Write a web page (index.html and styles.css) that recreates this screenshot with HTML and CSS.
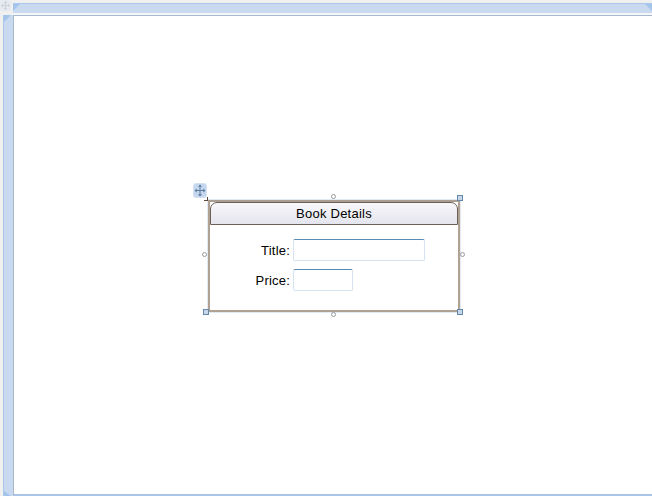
FILE: index.html
```html
<!DOCTYPE html>
<html lang="en">
<head>
<meta charset="utf-8">
<title>Book Details designer</title>
<link rel="stylesheet" href="styles.css">
</head>
<body>
<div class="designer">
  <div class="top-row">
    <svg class="corner-icon" width="13" height="13" viewBox="0 0 13 13">
      <rect x="0" y="0" width="11" height="11" rx="2" fill="#e6e9ee"/>
      <path d="M5.5 1.5v8M1.5 5.5h8M4 3l1.5-1.5L7 3M4 8l1.5 1.5L7 8M3 4L1.5 5.5 3 7M8 4l1.5 1.5L8 7" fill="none" stroke="#cdd3db" stroke-width="1"/>
    </svg>
    <div class="ruler ruler-top">
      <span class="tick tick-left"></span>
      <span class="tick tick-right"></span>
    </div>
  </div>
  <div class="main-row">
    <div class="ruler ruler-left">
      <span class="tick tick-start"></span>
      <span class="tick tick-end"></span>
    </div>
    <div class="canvas">
      <div class="selection">
        <svg class="move-handle" width="14" height="15" viewBox="0 0 14 15">
          <rect x="0.5" y="0.5" width="13" height="14" rx="2.5" fill="#c5d7ee" stroke="#d6e2f2"/>
          <path d="M7 2.5v10M2.5 7.5h9" stroke="#5f7c9e" stroke-width="1" fill="none"/>
          <path d="M7 1.5l2 2.2H5zM7 13.5l2-2.2H5zM1.5 7.5l2.2-2v4zM12.5 7.5l-2.2-2v4z" fill="#5f7c9e"/>
        </svg>
        <span class="corner-mark"></span>
        <span class="handle round top-mid"></span>
        <span class="handle round left-mid"></span>
        <span class="handle round right-mid"></span>
        <span class="handle round bottom-mid"></span>
        <span class="handle square top-right"></span>
        <span class="handle square bottom-left"></span>
        <span class="handle square bottom-right"></span>
        <div class="card">
          <div class="card-header">Book Details</div>
          <div class="card-body">
            <div class="field">
              <label class="field-label">Title:</label>
              <input class="text-input wide" type="text">
            </div>
            <div class="field">
              <label class="field-label">Price:</label>
              <input class="text-input narrow" type="text">
            </div>
          </div>
        </div>
      </div>
    </div>
  </div>
</div>
</body>
</html>
```

FILE: styles.css
```css
* { box-sizing: border-box; }
html, body { margin: 0; padding: 0; height: 100%; overflow: hidden; }
body { background: #f0f0f0; font-family: "Liberation Sans", Arial, sans-serif; }

.designer { width: 652px; height: 496px; display: flex; flex-direction: column; padding-top: 3px; }

.top-row { height: 12px; display: flex; flex: none; padding-left: 13px; position: relative; }
.corner-icon { position: absolute; left: 0; top: -3px; }

.ruler { background: #c9daf0; position: relative; }
.ruler-top { flex: 1; border-top: 1px solid #a9c8ec; border-bottom: 2px solid #f4f6f9; }
.ruler-left { width: 10px; flex: none; margin-left: 3px; border-left: 1px solid #a9c8ec; }

.tick { position: absolute; width: 0; height: 0; }
.tick-left { left: 0; top: 0; border-top: 7px solid #a3c5ec; border-right: 7px solid transparent; }
.tick-right { right: 0; top: 0; border-top: 7px solid #a3c5ec; border-left: 7px solid transparent; }
.tick-start { left: 0; top: 0; border-top: 7px solid #a3c5ec; border-right: 7px solid transparent; }
.tick-end { left: 0; bottom: 0; border-bottom: 5px solid #a3c5ec; border-right: 7px solid transparent; }

.main-row { flex: 1; display: flex; min-height: 0; }

.canvas {
  flex: 1;
  background: #fff;
  border-left: 1px solid #a9b9cc;
  border-top: 1px solid #a9b9cc;
  border-bottom: 2px solid #a9c4e4;
  padding: 184px 0 0 194px;
  margin-bottom: 0;
}

.selection { position: relative; width: 252px; height: 112px; }

.card {
  width: 252px;
  height: 112px;
  border: 2px solid #b0a292;
  border-top-color: #aa9e90;
  box-shadow: 0 0 0 1px rgba(169, 196, 228, 0.35);
  background: #fff;
  display: flex;
  flex-direction: column;
}
.card-header {
  height: 23px;
  flex: none;
  background: linear-gradient(#f8f8fb, #e4e4ee);
  border: 1px solid #6b5f57;
  border-width: 1px 1px 1px 1px;
  border-radius: 7px 7px 0 0;
  font-size: 13px;
  line-height: 21px;
  letter-spacing: 0.25px;
  text-align: center;
  color: #000;
}
.card-body { flex: 1; padding-top: 14px; display: flex; flex-direction: column; gap: 8px; }
.field { display: flex; align-items: center; height: 22px; }
.field-label { width: 80px; text-align: right; font-size: 13px; color: #000; letter-spacing: 0.2px; }
.text-input {
  height: 22px;
  margin-left: 3px;
  padding: 0;
  background: #fff;
  border: 1px solid #d5e2ef;
  border-top-color: #5b8ab5;
  border-radius: 2px;
  outline: none;
}
.wide { width: 132px; }
.narrow { width: 60px; }

.move-handle { position: absolute; left: -15px; top: -17px; }
.corner-mark {
  position: absolute; left: -4px; top: -3px; width: 4px; height: 4px;
  border-right: 1px solid #5b4a3a; border-bottom: 1px solid #5b4a3a;
}
.handle { position: absolute; }
.round { width: 5px; height: 5px; border-radius: 50%; border: 1px solid #9a9a9a; background: #fff; }
.square { width: 6px; height: 6px; background: #c9d8e8; border: 1px solid #6487ab; }
.top-mid { left: 123px; top: -6px; }
.bottom-mid { left: 123px; top: 112px; }
.left-mid { left: -6px; top: 52px; }
.right-mid { left: 252px; top: 52px; }
.top-right { left: 249px; top: -5px; }
.bottom-left { left: -5px; top: 109px; }
.bottom-right { left: 249px; top: 109px; }
```
